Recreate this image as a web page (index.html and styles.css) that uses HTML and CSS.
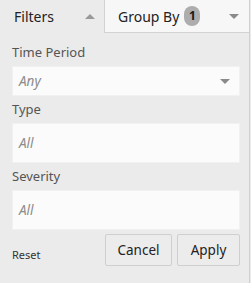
FILE: index.html
```html
<!DOCTYPE html>
<html lang="en">
<head>
    <meta charset="UTF-8">
    <title>Filters</title>
    <link rel="stylesheet" href="styles.css">
</head>
<body>
    <div class="panel">
        <div class="tabs">
            <div class="tab active">
                <span>Filters</span>
                <span class="caret up"></span>
            </div>
            <div class="tab">
                <span>Group By</span>
                <span class="badge">1</span>
                <span class="caret down"></span>
            </div>
        </div>

        <div class="body">
            <div class="field">
                <label>Time Period</label>
                <div class="input select">
                    <span class="placeholder">Any</span>
                    <span class="caret down"></span>
                </div>
            </div>
            <div class="field">
                <label>Type</label>
                <div class="input tall"><span class="placeholder">All</span></div>
            </div>
            <div class="field">
                <label>Severity</label>
                <div class="input tall"><span class="placeholder">All</span></div>
            </div>

            <div class="actions">
                <a class="reset">Reset</a>
                <button class="cancel">Cancel</button>
                <button class="apply">Apply</button>
            </div>
        </div>
    </div>
</body>
</html>
```

FILE: styles.css
```css
body {
    margin: 0;
    font-family: "Noto Sans", "Open Sans", sans-serif;
    background-color: #ebebeb;
}
.panel {
    width: 250px;
    height: 283px;
    border-right: 1px solid #d0d0d0;
    box-sizing: border-box;
    background-color: #ebebeb;
}
.tabs {
    display: flex;
    height: 33px;
}
.tab {
    display: flex;
    align-items: center;
    gap: 5px;
    padding: 0 10px 0 14px;
    font-size: 14px;
    color: #222;
    box-sizing: border-box;
}
.tab.active {
    width: 104px;
    justify-content: space-between;
    padding-right: 9px;
}
.tab:not(.active) {
    flex: 1;
    background-color: #f7f7f7;
    border-left: 1px solid #d2d2d2;
    border-bottom: 1px solid #d2d2d2;
    padding-left: 13px;
}
.badge {
    background-color: #adadad;
    color: #1a1a1a;
    font-size: 12px;
    font-weight: bold;
    text-align: center;
    width: 16px;
    line-height: 20px;
    border-radius: 8px;
}
.tab .caret.down {
    margin-left: auto;
}
.caret {
    width: 0;
    height: 0;
    border-left: 5px solid transparent;
    border-right: 5px solid transparent;
}
.caret.up { border-bottom: 5px solid #999; }
.caret.down { border-top: 5px solid #8a8a8a; }
.body {
    padding: 10px 9px 0 12px;
}
.field {
    margin-bottom: 4px;
}
.field label {
    display: block;
    font-size: 13px;
    color: #555;
    line-height: 19px;
    margin-bottom: 4px;
}
.input {
    display: flex;
    align-items: center;
    justify-content: space-between;
    height: 30px;
    padding: 0 9px 0 6px;
    background-color: #fbfbfb;
    border: 1px solid #f1f1f1;
    box-sizing: border-box;
}
.input.tall {
    height: 40px;
}
.placeholder {
    font-style: italic;
    font-size: 13.5px;
    color: #8c8c8c;
}
.actions {
    display: flex;
    align-items: center;
    gap: 5px;
    margin-top: 4px;
}
.reset {
    flex: 1;
    font-size: 11px;
    color: #333;
    padding-top: 8px;
}
button {
    height: 32px;
    padding: 0;
    font-family: inherit;
    font-size: 13.5px;
    color: #222;
    background-color: #ececec;
    border: 1px solid #cfcfcf;
    border-radius: 2px;
}
.cancel { width: 67px; }
.apply { width: 63px; }
```
